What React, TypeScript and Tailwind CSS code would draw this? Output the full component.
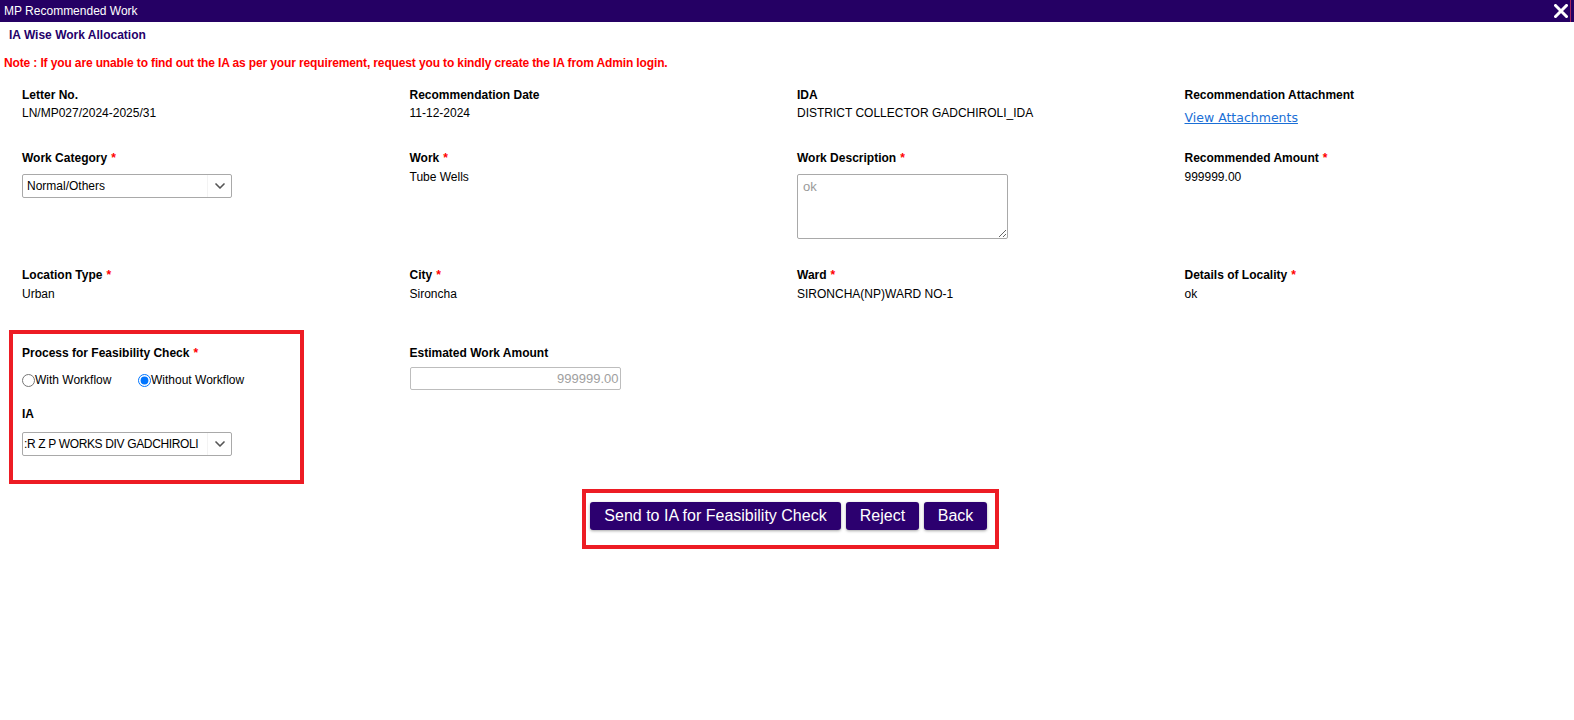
import React from 'react';
import { ChevronDown } from 'lucide-react';

const Req = () => <span className="text-[#ff0000] ml-1">*</span>;

const Label: React.FC<{ text: string; req?: boolean }> = ({ text, req }) => (
  <div className="text-[12px] leading-[14px] font-bold text-black">
    {text}
    {req && <Req />}
  </div>
);

const Value: React.FC<{ text: string; gap?: string }> = ({ text, gap = 'mt-1' }) => (
  <div className={`text-[12px] leading-[14px] text-black ${gap}`}>{text}</div>
);

const FakeSelect: React.FC<{ text: string; tight?: boolean }> = ({ text, tight }) => (
  <div className="w-[210px] h-[24px] border border-[#a9a9a9] rounded-[2px] flex items-center bg-white overflow-hidden">
    <div
      className={`flex-1 text-[12px] text-black whitespace-nowrap overflow-hidden ${
        tight ? 'pl-[1px] tracking-[-0.35px]' : 'pl-[4px]'
      }`}
    >
      {text}
    </div>
    <div className="w-[24px] h-full border-l border-[#f3f3f3] flex items-center justify-center text-[#555]">
      <ChevronDown size={16} strokeWidth={2.5} />
    </div>
  </div>
);

export default function App() {
  return (
    <div className="w-[1574px] h-[720px] bg-white font-['Liberation_Sans',Arial,sans-serif] text-black">
      {/* title bar */}
      <div className="h-[22px] bg-[#250064] flex items-center pl-1 relative">
        <span className="text-white text-[12px] leading-[14px]">MP Recommended Work</span>
        <svg className="ml-auto mr-[6px]" width="14" height="14" viewBox="0 0 14 14">
          <path d="M1.5 1.5 L12.5 12.5 M12.5 1.5 L1.5 12.5" stroke="white" strokeWidth="3" strokeLinecap="square" />
        </svg>
        <div className="absolute right-[3px] top-0 h-[22px] w-[1px] bg-[#a3245c]" />
      </div>

      <div className="pl-[9px] pt-[6px] text-[12px] leading-[14px] font-bold text-[#24006a]">
        IA Wise Work Allocation
      </div>
      <div className="pl-[4px] mt-[14px] text-[12px] leading-[14px] font-bold text-[#ff0000] tracking-[-0.13px]">
        Note : If you are unable to find out the IA as per your requirement, request you to kindly create the IA from Admin login.
      </div>

      <div className="pl-[22px] mt-[18px]">
        {/* row 1 */}
        <div className="grid grid-cols-[387.5px_387.5px_387.5px_387.5px] h-[63px]">
          <div>
            <Label text="Letter No." />
            <Value text="LN/MP027/2024-2025/31" />
          </div>
          <div>
            <Label text="Recommendation Date" />
            <Value text="11-12-2024" />
          </div>
          <div>
            <Label text="IDA" />
            <Value text="DISTRICT COLLECTOR GADCHIROLI_IDA" />
          </div>
          <div>
            <Label text="Recommendation Attachment" />
            <a className="block mt-[9px] text-[12.5px] leading-[14px] text-[#1a6fd6] underline font-['DejaVu_Sans',Verdana,sans-serif]">
              View Attachments
            </a>
          </div>
        </div>

        {/* row 2 */}
        <div className="grid grid-cols-[387.5px_387.5px_387.5px_387.5px] h-[117px]">
          <div>
            <Label text="Work Category" req />
            <div className="mt-[9px]">
              <FakeSelect text="Normal/Others" />
            </div>
          </div>
          <div>
            <Label text="Work" req />
            <Value text="Tube Wells" gap="mt-[5px]" />
          </div>
          <div>
            <Label text="Work Description" req />
            <textarea
              readOnly
              value="ok"
              className="mt-[9px] block w-[211px] h-[65px] border border-[#a9a9a9] rounded-[2px] px-[5px] py-[2px] text-[13px] text-[#9a9a9a] outline-none"
            />
          </div>
          <div>
            <Label text="Recommended Amount" req />
            <Value text="999999.00" gap="mt-[5px]" />
          </div>
        </div>

        {/* row 3 */}
        <div className="grid grid-cols-[387.5px_387.5px_387.5px_387.5px] h-[62px]">
          <div>
            <Label text="Location Type" req />
            <Value text="Urban" gap="mt-[5px]" />
          </div>
          <div>
            <Label text="City" req />
            <Value text="Sironcha" gap="mt-[5px]" />
          </div>
          <div>
            <Label text="Ward" req />
            <Value text="SIRONCHA(NP)WARD NO-1" gap="mt-[5px]" />
          </div>
          <div>
            <Label text="Details of Locality" req />
            <Value text="ok" gap="mt-[5px]" />
          </div>
        </div>

        {/* row 4 */}
        <div className="grid grid-cols-[387.5px_387.5px_387.5px_387.5px]">
          <div>
            <div className="ml-[-13px] w-[295px] h-[154px] border-4 border-[#ed1c24] pt-[12px] pl-[9px]">
              <Label text="Process for Feasibility Check" req />
              <div className="flex items-center mt-[13px] text-[12px] leading-[14px]">
                <label className="flex items-center w-[116px]">
                  <input type="radio" name="wf" className="m-0 w-[13px] h-[13px]" />
                  <span>With Workflow</span>
                </label>
                <label className="flex items-center">
                  <input type="radio" name="wf" defaultChecked className="m-0 w-[13px] h-[13px]" />
                  <span>Without Workflow</span>
                </label>
              </div>
              <div className="mt-[20px]">
                <Label text="IA" />
              </div>
              <div className="mt-[11px]">
                <FakeSelect text=":R Z P WORKS DIV GADCHIROLI" tight />
              </div>
            </div>
          </div>
          <div className="pt-[16px]">
            <Label text="Estimated Work Amount" />
            <div className="mt-[7px] w-[211px] h-[23px] border border-[#bdbdbd] rounded-[2px] flex items-center justify-end pr-[1px] text-[13px] text-[#a0a0a0]">
              999999.00
            </div>
          </div>
          <div />
          <div />
        </div>
      </div>

      {/* buttons */}
      <div className="flex justify-center mt-[5px] pl-[7px]">
        <div className="w-[417px] h-[60px] border-4 border-[#ed1c24] flex items-start gap-[5px] pl-[4px] pt-[9px]">
          <button className="w-[251px] h-[28px] bg-[#2c006f] text-white text-[16px] rounded-[3px] shadow-[0_1px_3px_rgba(0,0,0,0.35)]">
            Send to IA for Feasibility Check
          </button>
          <button className="w-[73px] h-[28px] bg-[#2c006f] text-white text-[16px] rounded-[3px] shadow-[0_1px_3px_rgba(0,0,0,0.35)]">
            Reject
          </button>
          <button className="w-[63px] h-[28px] bg-[#2c006f] text-white text-[16px] rounded-[3px] shadow-[0_1px_3px_rgba(0,0,0,0.35)]">
            Back
          </button>
        </div>
      </div>
    </div>
  );
}
